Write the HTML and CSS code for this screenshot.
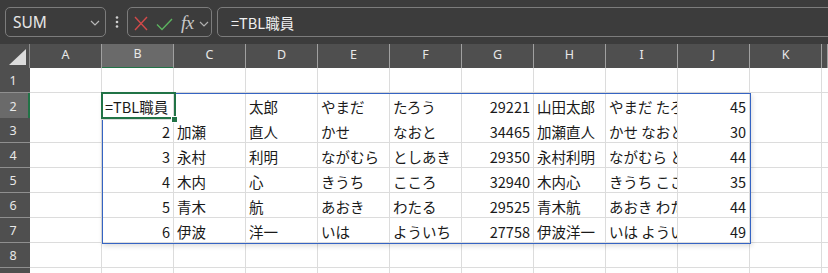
FILE: index.html
```html
<!DOCTYPE html>
<html lang="ja">
<head>
<meta charset="utf-8">
<title>Excel</title>
<link rel="stylesheet" href="styles.css">
</head>
<body>
<div class="toolbar">
  <div class="namebox">
    <span class="nb-text">SUM</span>
    <svg class="chev" width="10" height="6" viewBox="0 0 10 6"><polyline points="1,1 5,5 9,1" fill="none" stroke="#b8b8b8" stroke-width="1.2"/></svg>
  </div>
  <div class="dots">
    <svg width="4" height="12" viewBox="0 0 4 12"><circle cx="2" cy="1.5" r="1.3" fill="#d0d0d0"/><circle cx="2" cy="6" r="1.3" fill="#d0d0d0"/><circle cx="2" cy="10.5" r="1.3" fill="#d0d0d0"/></svg>
  </div>
  <div class="fxbox">
    <svg class="ic-x" width="14" height="15" viewBox="0 0 14 15"><path d="M1 1 L13 14 M13 1 L1 14" stroke="#d24a4a" stroke-width="1.4" fill="none"/></svg>
    <svg class="ic-ok" width="17" height="13" viewBox="0 0 17 13"><polyline points="1,6.5 6,11.5 16,1" fill="none" stroke="#5cb35f" stroke-width="1.4"/></svg>
    <span class="fx">fx</span>
    <svg class="chev2" width="10" height="6" viewBox="0 0 10 6"><polyline points="1,1 5,5 9,1" fill="none" stroke="#b0b0b0" stroke-width="1.2"/></svg>
  </div>
  <div class="formula">=TBL職員</div>
</div>

<div class="sheet">
  <div class="row head">
    <div class="corner"><svg width="17" height="16" viewBox="0 0 17 16"><polygon points="17,0 17,16 0,16" fill="#dcdcdc"/></svg></div>
    <div class="ch">A</div><div class="ch chsel">B</div><div class="ch">C</div><div class="ch">D</div><div class="ch">E</div><div class="ch">F</div><div class="ch">G</div><div class="ch">H</div><div class="ch">I</div><div class="ch">J</div><div class="ch">K</div><div class="ch"></div>
  </div>

  <div class="row">
    <div class="rh">1</div>
    <div class="c"></div><div class="c"></div><div class="c"></div><div class="c"></div><div class="c"></div><div class="c"></div><div class="c"></div><div class="c"></div><div class="c"></div><div class="c"></div><div class="c"></div><div class="c"></div>
  </div>

  <div class="row">
    <div class="rh rhsel">2</div>
    <div class="c"></div><div class="c over">=TBL職員</div><div class="c"></div><div class="c">太郎</div><div class="c">やまだ</div><div class="c">たろう</div><div class="c n">29221</div><div class="c">山田太郎</div><div class="c">やまだ たろう</div><div class="c n">45</div><div class="c"></div><div class="c"></div>
  </div>

  <div class="row">
    <div class="rh">3</div>
    <div class="c"></div><div class="c n">2</div><div class="c">加瀬</div><div class="c">直人</div><div class="c">かせ</div><div class="c">なおと</div><div class="c n">34465</div><div class="c">加瀬直人</div><div class="c">かせ なおと</div><div class="c n">30</div><div class="c"></div><div class="c"></div>
  </div>

  <div class="row">
    <div class="rh">4</div>
    <div class="c"></div><div class="c n">3</div><div class="c">永村</div><div class="c">利明</div><div class="c">ながむら</div><div class="c">としあき</div><div class="c n">29350</div><div class="c">永村利明</div><div class="c">ながむら としあき</div><div class="c n">44</div><div class="c"></div><div class="c"></div>
  </div>

  <div class="row">
    <div class="rh">5</div>
    <div class="c"></div><div class="c n">4</div><div class="c">木内</div><div class="c">心</div><div class="c">きうち</div><div class="c">こころ</div><div class="c n">32940</div><div class="c">木内心</div><div class="c">きうち こころ</div><div class="c n">35</div><div class="c"></div><div class="c"></div>
  </div>

  <div class="row">
    <div class="rh">6</div>
    <div class="c"></div><div class="c n">5</div><div class="c">青木</div><div class="c">航</div><div class="c">あおき</div><div class="c">わたる</div><div class="c n">29525</div><div class="c">青木航</div><div class="c">あおき わたる</div><div class="c n">44</div><div class="c"></div><div class="c"></div>
  </div>

  <div class="row">
    <div class="rh">7</div>
    <div class="c"></div><div class="c n">6</div><div class="c">伊波</div><div class="c">洋一</div><div class="c">いは</div><div class="c">よういち</div><div class="c n">27758</div><div class="c">伊波洋一</div><div class="c">いは よういち</div><div class="c n">49</div><div class="c"></div><div class="c"></div>
  </div>

  <div class="row">
    <div class="rh">8</div>
    <div class="c"></div><div class="c"></div><div class="c"></div><div class="c"></div><div class="c"></div><div class="c"></div><div class="c"></div><div class="c"></div><div class="c"></div><div class="c"></div><div class="c"></div><div class="c"></div>
  </div>

  <div class="row">
    <div class="rh">9</div>
    <div class="c"></div><div class="c"></div><div class="c"></div><div class="c"></div><div class="c"></div><div class="c"></div><div class="c"></div><div class="c"></div><div class="c"></div><div class="c"></div><div class="c"></div><div class="c"></div>
  </div>

  <div class="spill"></div>
  <div class="active"></div>
  <div class="handle"></div>
</div>
</body>
</html>
```

FILE: styles.css
```css
html, body {
  margin: 0;
  padding: 0;
  width: 828px;
  height: 273px;
  overflow: hidden;
  background: #ffffff;
}

.toolbar {
  height: 44px;
  box-sizing: border-box;
  background: #3c3c3c;
  display: flex;
  align-items: flex-start;
  padding: 7px 0 0 5px;
  overflow: hidden;
}

.namebox {
  width: 101px;
  height: 30px;
  box-sizing: border-box;
  border: 1px solid #7c7c7c;
  border-radius: 5px;
  display: flex;
  align-items: center;
  justify-content: space-between;
  padding: 0 5px 0 7px;
  color: #e6e6e6;
  font-family: "Noto Sans", "Open Sans", sans-serif;
  font-size: 15.5px;
}

.nb-text {
  line-height: 1;
  margin-top: 1px;
}

.chev {
  margin-top: 2px;
}

.dots {
  width: 21px;
  height: 30px;
  display: flex;
  align-items: center;
  justify-content: center;
}

.fxbox {
  width: 85px;
  height: 30px;
  box-sizing: border-box;
  border: 1px solid #7c7c7c;
  border-radius: 5px;
  display: flex;
  align-items: center;
  padding-left: 6px;
}

.ic-x {
  margin-top: 2px;
}

.ic-ok {
  margin-left: 8px;
  margin-top: 4px;
}

.fx {
  margin-left: 8px;
  font-family: "Liberation Serif", "DejaVu Serif", serif;
  font-style: italic;
  font-size: 19px;
  color: #c8c8c8;
  line-height: 1;
  letter-spacing: -0.5px;
}

.chev2 {
  margin-left: 5px;
  margin-top: 3px;
}

.formula {
  flex: 1;
  margin-left: 5px;
  margin-right: -20px;
  height: 30px;
  box-sizing: border-box;
  border: 1px solid #7c7c7c;
  border-radius: 5px;
  padding-left: 13px;
  display: flex;
  align-items: center;
  color: #f0f0f0;
  font-family: "Noto Sans CJK JP", "Noto Sans", sans-serif;
  font-size: 14.5px;
}

.sheet {
  position: relative;
}

.row {
  display: grid;
  grid-template-columns: 30px repeat(11, 72px) 1fr;
  height: 25px;
}

.row.head {
  height: 24px;
  background: #4f4f4f;
}

.corner {
  box-sizing: border-box;
  border-right: 1px solid #8c8c8c;
  border-bottom: 1px solid #9a9a9a;
  display: flex;
  align-items: flex-end;
  justify-content: flex-end;
  padding: 0 3px 3px 0;
}

.ch {
  box-sizing: border-box;
  border-right: 1px solid #a0a0a0;
  border-bottom: 1px solid #a5a5a5;
  color: #e8e8e8;
  font-family: "Noto Sans", "Open Sans", sans-serif;
  font-size: 12.5px;
  display: flex;
  align-items: center;
  justify-content: center;
  padding-bottom: 5px;
  padding-top: 1px;
}

.ch.chsel {
  background: #6a6a6a;
  border-bottom: 2px solid #217346;
}

.rh {
  box-sizing: border-box;
  background: #4f4f4f;
  border-bottom: 1px solid #8f8f8f;
  color: #e8e8e8;
  font-family: "Noto Sans", "Open Sans", sans-serif;
  font-size: 12.5px;
  display: flex;
  align-items: center;
  justify-content: center;
  padding-right: 4px;
}

.rh.rhsel {
  background: #6a6a6a;
  border-right: 2px solid #217346;
  padding-right: 2px;
}

.c {
  box-sizing: border-box;
  border-right: 1px solid #dcdcdc;
  border-bottom: 1px solid #dcdcdc;
  background: #ffffff;
  color: #1a1a1a;
  font-family: "Noto Sans CJK JP", "Noto Sans", sans-serif;
  font-size: 14.5px;
  line-height: 25px;
  padding: 1px 3px 0 3px;
  white-space: nowrap;
  overflow: hidden;
}

.c.n {
  text-align: right;
}

.c.over {
  overflow: visible;
  position: relative;
  z-index: 1;
}

.spill {
  position: absolute;
  left: 102px;
  top: 49px;
  width: 649px;
  height: 151px;
  box-sizing: border-box;
  border: 1px solid #3564c3;
  box-shadow: 1px 2px 5px rgba(0, 0, 0, 0.14);
  pointer-events: none;
}

.active {
  position: absolute;
  left: 101px;
  top: 48px;
  width: 75px;
  height: 27px;
  box-sizing: border-box;
  border: 2px solid #217346;
  pointer-events: none;
  z-index: 2;
}

.handle {
  position: absolute;
  left: 171px;
  top: 72px;
  width: 7px;
  height: 7px;
  box-sizing: border-box;
  background: #217346;
  border: 1px solid #ffffff;
  z-index: 3;
}
```
